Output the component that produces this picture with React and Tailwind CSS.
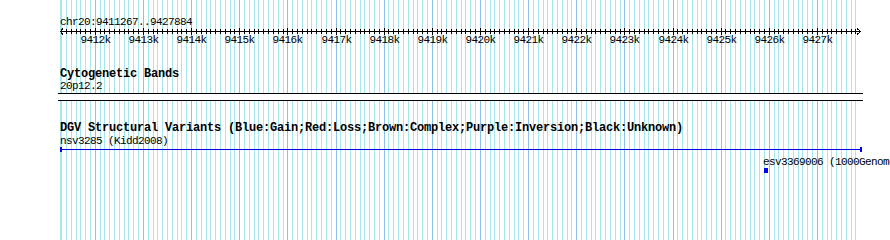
import React from "react";

const START = 9411267;
const END = 9427884;
const LEFT = 60;
const WIDTH = 800;
const SCALE = WIDTH / (END - START);

// bp -> pixel column on the page
const xOf = (bp) => Math.floor(LEFT + (bp - START) * SCALE);

const steps = [];
for (let bp = Math.ceil(START / 100) * 100; bp <= END; bp += 100) steps.push(bp);

const Grid = () => (
  <svg className="absolute inset-0" width="890" height="240" shapeRendering="crispEdges">
    <line x1="60.5" y1="0" x2="60.5" y2="240" stroke="#a8e6ee" />
    {steps.map((bp) => {
      const major = bp % 1000 === 0;
      const x = xOf(bp) + 0.5;
      return (
        <line
          key={bp}
          x1={x}
          y1="0"
          x2={x}
          y2="240"
          stroke={major ? "#8cbfec" : "#a8e6ee"}
        />
      );
    })}
  </svg>
);

const Ruler = () => (
  <svg width="890" height="20" shapeRendering="crispEdges" className="block">
    {/* main line sits at y=31 on the page; svg top is 28 */}
    <line x1="60" y1="3.5" x2="861" y2="3.5" stroke="#000" />
    <polyline points="63,0.5 60.5,3.5 63,6.5" fill="none" stroke="#000" />
    <polyline points="857,0.5 860.5,3.5 857,6.5" fill="none" stroke="#000" />
    {steps.map((bp) => {
      const x = xOf(bp) + 0.5;
      const major = bp % 1000 === 0;
      return (
        <line key={bp} x1={x} y1={major ? 0 : 1} x2={x} y2={major ? 7 : 6} stroke="#000" />
      );
    })}
    {steps
      .filter((bp) => bp % 1000 === 0)
      .map((bp) => (
        <text
          key={bp}
          x={xOf(bp) + 0.5}
          y="15"
          textAnchor="middle"
          fontFamily="'Liberation Mono', monospace"
          fontSize="11"
          letterSpacing="-0.6"
          fill="#000"
        >
          {bp / 1000}k
        </text>
      ))}
  </svg>
);

const Small = ({ children, className = "" }) => (
  <div
    className={
      "font-['Liberation_Mono',monospace] text-[11px] leading-[12px] tracking-[-0.6px] text-black whitespace-nowrap " +
      className
    }
  >
    {children}
  </div>
);

const Title = ({ children, className = "" }) => (
  <div
    className={
      "font-['Liberation_Mono',monospace] font-bold text-[12px] leading-[11px] tracking-[-0.2px] text-black whitespace-nowrap " +
      className
    }
  >
    {children}
  </div>
);

export default function App() {
  return (
    <div className="relative w-[890px] h-[240px] bg-white overflow-hidden">
      <Grid />
      <div className="relative flex flex-col">
        <Small className="mt-[16px] pl-[60px]">chr20:9411267..9427884</Small>
        <Ruler />

        {/* Cytogenetic bands track */}
        <div className="pl-[60px] flex flex-col">
          <Title className="mt-[21px]">Cytogenetic Bands</Title>
          <Small>20p12.2</Small>
          <div className="mt-px -ml-[2px] w-[805px] h-[8px] border-y border-black bg-white" />
        </div>

        {/* DGV track */}
        <div className="pl-[60px] flex flex-col">
          <Title className="mt-[22px]">
            DGV Structural Variants (Blue:Gain;Red:Loss;Brown:Complex;Purple:Inversion;Black:Unknown)
          </Title>
          <Small className="mt-px">nsv3285 (Kidd2008)</Small>
          <div className="flex items-center w-[802px] h-[5px]">
            <div className="w-[2px] h-[5px] bg-[#0000ff]" />
            <div className="flex-1 h-px bg-[#0000e0]" />
            <div className="w-[2px] h-[5px] bg-[#0000ff]" />
          </div>
          <div className="pl-[703px] mt-[4px] flex flex-col">
            <Small>esv3369006 (1000Genomes)</Small>
            <div className="ml-[1px] w-[4px] h-[5px] bg-[#0000ff]" />
          </div>
        </div>
      </div>
    </div>
  );
}
